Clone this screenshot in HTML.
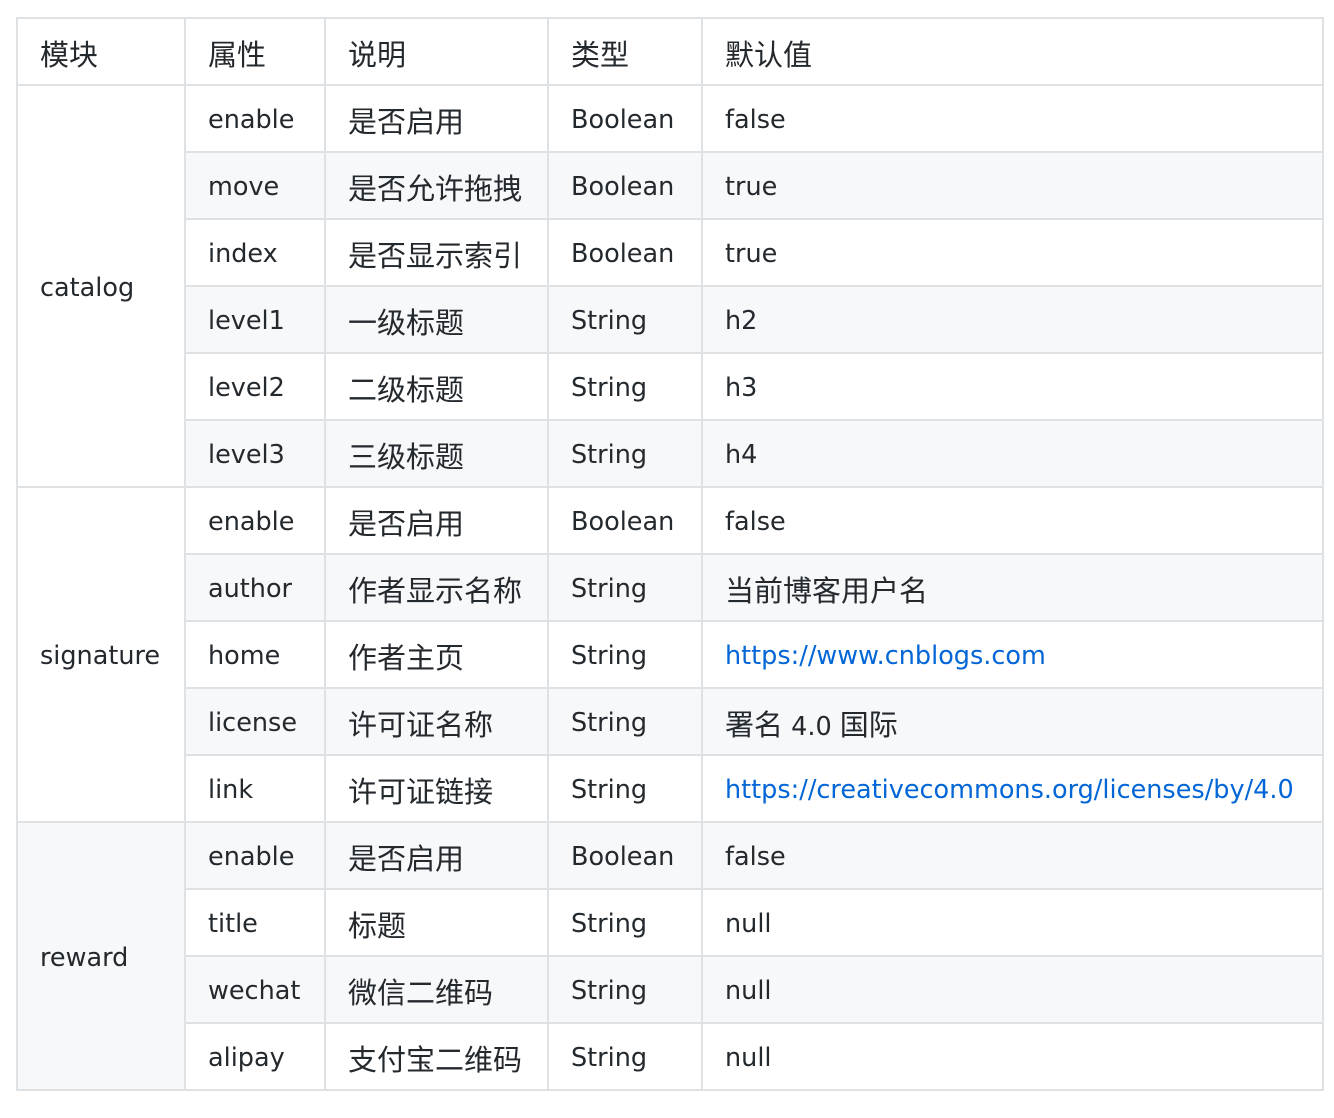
<!DOCTYPE html>
<html><head><meta charset="utf-8"><style>
html,body{margin:0;background:#fff;}
table{position:absolute;left:16px;top:17px;border-collapse:collapse;table-layout:fixed;font-family:"DejaVu Sans","Noto Sans CJK SC",sans-serif;font-size:25.5px;color:#24292e;}
td,th{border:2px solid #dfe2e5;padding:3px 0 0 22px;height:62px;font-weight:normal;text-align:left;white-space:nowrap;}
.c{font-family:"Noto Sans CJK SC",sans-serif;font-size:29px;}
tr.g{background:#f6f8fa;}
a{color:#0366d6;text-decoration:none;}
</style></head><body>
<table>
<colgroup><col style="width:168px"><col style="width:140px"><col style="width:223px"><col style="width:154px"><col style="width:621px"></colgroup>
<tr class="c"><th>模块</th><th>属性</th><th>说明</th><th>类型</th><th>默认值</th></tr>
<tr><td rowspan="6">catalog</td><td>enable</td><td class="c">是否启用</td><td>Boolean</td><td>false</td></tr>
<tr class="g"><td>move</td><td class="c">是否允许拖拽</td><td>Boolean</td><td>true</td></tr>
<tr><td>index</td><td class="c">是否显示索引</td><td>Boolean</td><td>true</td></tr>
<tr class="g"><td>level1</td><td class="c">一级标题</td><td>String</td><td>h2</td></tr>
<tr><td>level2</td><td class="c">二级标题</td><td>String</td><td>h3</td></tr>
<tr class="g"><td>level3</td><td class="c">三级标题</td><td>String</td><td>h4</td></tr>
<tr><td rowspan="5">signature</td><td>enable</td><td class="c">是否启用</td><td>Boolean</td><td>false</td></tr>
<tr class="g"><td>author</td><td class="c">作者显示名称</td><td>String</td><td class="c">当前博客用户名</td></tr>
<tr><td>home</td><td class="c">作者主页</td><td>String</td><td><a>https://www.cnblogs.com</a></td></tr>
<tr class="g"><td>license</td><td class="c">许可证名称</td><td>String</td><td><span class="c">署名</span> 4.0 <span class="c">国际</span></td></tr>
<tr><td>link</td><td class="c">许可证链接</td><td>String</td><td><a>https://creativecommons.org/licenses/by/4.0</a></td></tr>
<tr class="g"><td rowspan="4">reward</td><td>enable</td><td class="c">是否启用</td><td>Boolean</td><td>false</td></tr>
<tr><td>title</td><td class="c">标题</td><td>String</td><td>null</td></tr>
<tr class="g"><td>wechat</td><td class="c">微信二维码</td><td>String</td><td>null</td></tr>
<tr><td>alipay</td><td class="c">支付宝二维码</td><td>String</td><td>null</td></tr>
</table>
</body></html>
